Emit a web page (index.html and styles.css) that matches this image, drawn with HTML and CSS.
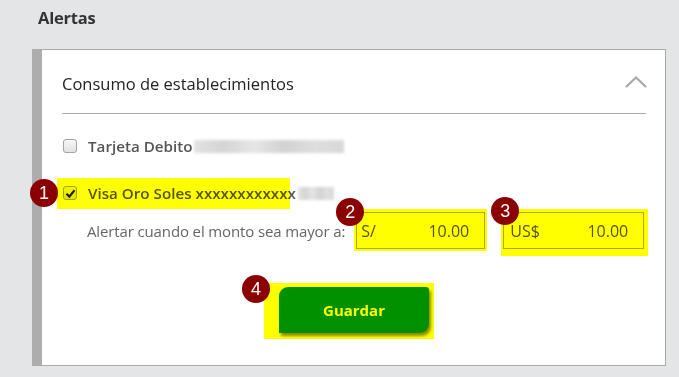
FILE: index.html
```html
<!DOCTYPE html>
<html lang="es">
<head>
  <meta charset="UTF-8" />
  <title>Alertas</title>
  <link rel="stylesheet" href="styles.css">
</head>
<body>
  <h1 class="title">Alertas</h1>

  <section class="card">
    <header class="card-head">
      <span>Consumo de establecimientos</span>
      <svg class="chevron" width="22" height="12" viewBox="0 0 22 12">
        <path d="M1 11 L11 1.5 L21 11" fill="none" stroke="#aaa" stroke-width="2.2" />
      </svg>
    </header>

    <div class="card-body">
      <div class="check-row">
        <span class="box"></span>
        <span class="label">Tarjeta Debito</span>
        <span class="masked wide"></span>
      </div>

      <div class="check-row mark">
        <span class="box checked">
          <svg width="11" height="11" viewBox="0 0 11 11"><path d="M1.5 5.8 L4.3 8.6 L9.6 2.2" fill="none" stroke="#222" stroke-width="2.2" /></svg>
        </span>
        <span class="label">Visa Oro Soles xxxxxxxxxxxx</span>
        <span class="masked short"></span>
        <i class="hl hl-1"></i>
        <b class="badge b-1">1</b>
      </div>

      <div class="amount-row">
        <span class="hint">Alertar cuando el monto sea mayor a:</span>
        <div class="field soles">
          <span>S/</span><span>10.00</span>
          <i class="hl hl-2"></i>
          <b class="badge b-2">2</b>
        </div>
        <div class="field dolares">
          <span>US$</span><span>10.00</span>
          <i class="hl hl-3"></i>
          <b class="badge b-3">3</b>
        </div>
      </div>

      <div class="actions">
        <div class="btn-wrap">
          <button class="btn">Guardar</button>
          <i class="hl hl-4"></i>
          <b class="badge b-4">4</b>
        </div>
      </div>
    </div>
  </section>
</body>
</html>
```

FILE: styles.css
```css
body {
  margin: 0;
  background: #e4e5e7;
  font-family: 'Open Sans', sans-serif;
  color: #333;
}

.title {
  margin: 0;
  padding: 6px 0 0 38px;
  height: 43px;
  font-size: 16.5px;
  font-weight: 700;
  color: #333;
  letter-spacing: -0.2px;
}

.card {
  margin-left: 32px;
  width: 623px;
  background: white;
  border: 1px solid #aaa;
  border-left: 10px solid #adadad;
  padding-bottom: 32px;
}

.card-head {
  margin: 0 19px 0 20px;
  height: 60px;
  padding-top: 3px;
  border-bottom: 1px solid #aaa;
  display: flex;
  align-items: center;
  justify-content: space-between;
  font-size: 16.5px;
  color: #222;
}

.chevron {
  margin-right: -1px;
  margin-top: -3px;
}

.card-body {
  padding: 19px 19px 0 20px;
}

.check-row {
  position: relative;
  display: flex;
  align-items: center;
  height: 26px;
  padding-left: 1px;
}

.check-row.mark {
  margin-top: 21px;
}

.box {
  width: 12px;
  height: 12px;
  border: 1px solid #a3a3a3;
  border-radius: 3px;
  background: linear-gradient(#f6f6f6, #e2e2e2);
  display: flex;
  align-items: center;
  justify-content: center;
  margin-right: 11px;
}

.label {
  font-size: 15.2px;
  font-weight: 600;
  color: #555;
  white-space: nowrap;
}

.masked {
  display: inline-block;
  height: 13px;
  background: linear-gradient(90deg, #e2e2e2, #d4d4d4 20%, #e6e6e6 40%, #d2d2d2 60%, #dedede 80%, #d8d8d8);
  filter: blur(1.5px);
}

.masked.wide {
  width: 150px;
  margin-left: 1px;
}

.masked.short {
  width: 36px;
  margin-left: 2px;
}

.amount-row {
  display: flex;
  align-items: center;
  margin-top: 6px;
  padding-left: 25px;
}

.hint {
  font-size: 15px;
  color: #666;
  margin-right: 11px;
  white-space: nowrap;
  letter-spacing: -0.13px;
}

.field {
  position: relative;
  flex: none;
  height: 35px;
  border: 1px solid #aaa;
  display: flex;
  align-items: center;
  justify-content: space-between;
  padding: 0 15px 0 4px;
  font-size: 16px;
  color: #555;
}

.field.soles {
  width: 108px;
}

.field.dolares {
  width: 118px;
  margin-left: 18px;
  padding-left: 6px;
}

.actions {
  display: flex;
  justify-content: center;
  margin-top: 38px;
}

.btn-wrap {
  position: relative;
}

.btn {
  display: block;
  width: 150px;
  height: 46px;
  border: 0;
  background: #009000;
  color: white;
  font-family: 'Open Sans', sans-serif;
  font-size: 15px;
  font-weight: 700;
  border-radius: 9px 3px 9px 0;
  box-shadow: 2px 3px 3px rgba(0, 0, 0, 0.45);
}

/* annotation layer */
.hl {
  position: absolute;
  background: #ffff00;
  mix-blend-mode: multiply;
  pointer-events: none;
}

.hl-1 { left: -5px; top: -2px; width: 233px; height: 31px; }
.hl-2 { left: -3px; top: -4px; right: -3px; bottom: -3px; }
.hl-3 { left: -3px; top: -4px; right: -5px; bottom: -8px; }
.hl-4 { left: -15px; top: -4px; right: -5px; bottom: -6px; }

.badge {
  position: absolute;
  width: 28px;
  height: 28px;
  border-radius: 50%;
  background: #8b0000;
  color: white;
  font-family: 'Liberation Sans', Arial, sans-serif;
  font-weight: 400;
  font-size: 18px;
  line-height: 28px;
  text-align: center;
}

.b-1 { left: -32px; top: -1px; }
.b-2 { left: -21px; top: -15px; }
.b-3 { left: -13px; top: -16px; }
.b-4 { left: -37px; top: -12px; }
```
